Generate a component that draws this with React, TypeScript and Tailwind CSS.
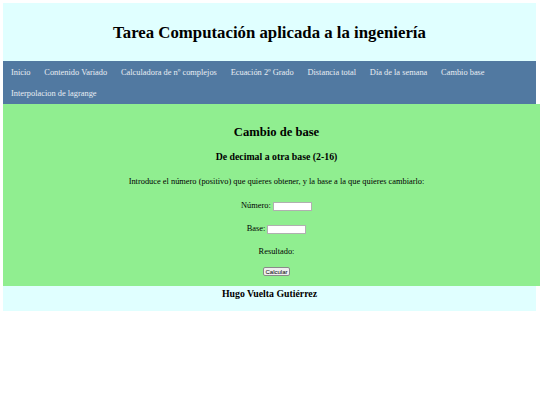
export default function App() {
  const links = [
    "Inicio",
    "Contenido Variado",
    "Calculadora de nº complejos",
    "Ecuación 2º Grado",
    "Distancia total",
    "Día de la semana",
    "Cambio base",
    "Interpolacion de lagrange",
  ];
  return (
    <div className="w-[540px] h-[405px] overflow-hidden bg-white pt-[3px] pl-[3px] text-black" style={{ fontFamily: '"Liberation Serif", "Times New Roman", serif' }}>
      <div className="w-[533px] bg-[#e0ffff]">
        <header className="h-[58px] flex items-center justify-center pt-[3px]">
          <h1 className="text-[16.8px] font-bold leading-none">Tarea Computación aplicada a la ingeniería</h1>
        </header>
        <nav className="h-[43px] bg-[#5179a1] flex flex-wrap content-start pl-[2.4px] py-[0.5px] gap-x-[2.6px]">
          {links.map((l) => (
            <a key={l} className="h-[21px] leading-[21px] px-[5.6px] text-[8.4px] text-[#e8edf3]">
              {l}
            </a>
          ))}
        </nav>
        <section className="w-[547px] h-[182px] bg-[#90ee90] pt-[17px] flex flex-col items-center">
          <h2 className="h-[22px] leading-[22px] text-[12.6px] font-bold">Cambio de base</h2>
          <h3 className="h-[28px] leading-[28px] text-[9.8px] font-bold">De decimal a otra base (2-16)</h3>
          <p className="h-[22px] leading-[22px] text-[8.4px]">Introduce el número (positivo) que quieres obtener, y la base a la que quieres cambiarlo:</p>
          <div className="h-[26px] flex items-center gap-[2.1px] text-[8.4px]">
            <span>Número:</span>
            <input className="w-[39px] h-[9px] bg-white border border-[#b0b0b0] outline-none" />
          </div>
          <div className="h-[20px] flex items-center gap-[2.1px] text-[8.4px]">
            <span>Base:</span>
            <input className="w-[39px] h-[9px] bg-white border border-[#b0b0b0] outline-none" />
          </div>
          <div className="h-[26px] flex items-center text-[8.4px]">Resultado:</div>
          <div className="h-[13px] flex items-center">
            <button className="w-[27px] h-[9px] bg-[#efefef] border border-[#8a8a8a] rounded-[2px] text-[6px] leading-none flex items-center justify-center" style={{ fontFamily: '"Liberation Sans", Arial, sans-serif' }}>
              Calcular
            </button>
          </div>
        </section>
        <footer className="h-[25px] pb-[9px]">
          <div className="h-[16px] leading-[16px] text-center text-[9.8px] font-bold">Hugo Vuelta Gutiérrez</div>
        </footer>
      </div>
    </div>
  );
}
